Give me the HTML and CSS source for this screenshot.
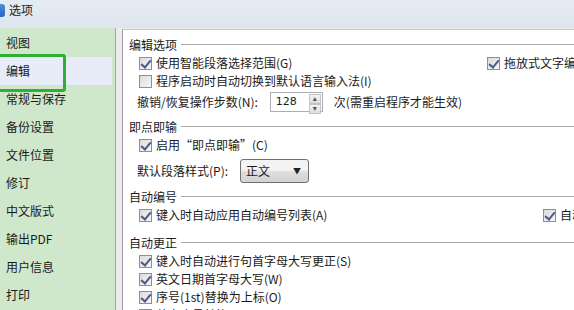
FILE: index.html
```html
<!DOCTYPE html>
<html lang="zh-CN">
  <head>
    <meta charset="UTF-8" />
    <title>选项</title>
    <link rel="stylesheet" href="styles.css">
  </head>
  <body>
    <header class="titlebar">
      <span class="titlebar__icon"></span>
      <span class="titlebar__text">选项</span>
    </header>
    <div class="window">
      <nav class="sidebar">
        <p class="sidebar__item">视图</p>
        <p class="sidebar__item is_active">编辑</p>
        <p class="sidebar__item">常规与保存</p>
        <p class="sidebar__item">备份设置</p>
        <p class="sidebar__item">文件位置</p>
        <p class="sidebar__item">修订</p>
        <p class="sidebar__item">中文版式</p>
        <p class="sidebar__item">输出PDF</p>
        <p class="sidebar__item">用户信息</p>
        <p class="sidebar__item">打印</p>
        <span class="highlight"></span>
      </nav>
      <main class="panel">
        <!-- 编辑选项 -->
        <section class="group">
          <h2 class="group__title">编辑选项</h2>
          <div class="row">
            <label class="check check--wide"><span class="box is_checked"></span>使用智能段落选择范围(G)</label>
            <label class="check"><span class="box is_checked"></span>拖放式文字编辑(D)</label>
          </div>
          <div class="row">
            <label class="check"><span class="box"></span>程序启动时自动切换到默认语言输入法(I)</label>
          </div>
          <div class="row row--field">
            <span class="label">撤销/恢复操作步数(N):</span>
            <span class="spin">
              <span class="spin__value">128</span>
              <span class="spin__buttons">
                <span class="spin__btn">▴</span>
                <span class="spin__btn">▾</span>
              </span>
            </span>
            <span class="label">次(需重启程序才能生效)</span>
          </div>
        </section>
        <!-- 即点即输 -->
        <section class="group">
          <h2 class="group__title">即点即输</h2>
          <div class="row">
            <label class="check"><span class="box is_checked"></span>启用“即点即输”(C)</label>
          </div>
          <div class="row row--select">
            <span class="label">默认段落样式(P):</span>
            <span class="select">正文<span class="select__arrow">▼</span></span>
          </div>
        </section>
        <!-- 自动编号 -->
        <section class="group">
          <h2 class="group__title">自动编号</h2>
          <div class="row">
            <label class="check check--wider"><span class="box is_checked"></span>键入时自动应用自动编号列表(A)</label>
            <label class="check"><span class="box is_checked"></span>自动带圈编号</label>
          </div>
        </section>
        <!-- 自动更正 -->
        <section class="group group--last">
          <h2 class="group__title">自动更正</h2>
          <div class="row">
            <label class="check"><span class="box is_checked"></span>键入时自动进行句首字母大写更正(S)</label>
          </div>
          <div class="row">
            <label class="check"><span class="box is_checked"></span>英文日期首字母大写(W)</label>
          </div>
          <div class="row">
            <label class="check"><span class="box is_checked"></span>序号(1st)替换为上标(O)</label>
          </div>
          <div class="row">
            <label class="check"><span class="box is_checked"></span>英文序号替换</label>
          </div>
        </section>
      </main>
    </div>
  </body>
</html>
```

FILE: styles.css
```css
:root {
  --color-text: #1a1a1a;
  --color-green: #cfe7cb;
  --color-line: #a9a9a9;
  --color-strip: #ececec;
  color: var(--color-text);
  font-family: 'Noto Sans CJK SC', 'DejaVu Sans', sans-serif;
  font-size: 12px;
  line-height: 1.5;
}
* {
  margin: 0;
  padding: 0;
  box-sizing: border-box;
}
body {
  width: 574px;
  height: 310px;
  overflow: hidden;
  background-color: var(--color-strip);
}
/* タイトルバー */
.titlebar {
  display: flex;
  align-items: center;
  gap: 4px;
  height: 28px;
  padding-bottom: 8px;
  background: linear-gradient(#e6ecf3, #dde5ee);
}
.titlebar__icon {
  width: 5px;
  height: 13px;
  border-radius: 0 3px 3px 0;
  background: linear-gradient(#4f8fd8, #2a64b8);
}
.titlebar__text {
  font-size: 12px;
  color: #222;
}
/* 本体 */
.window {
  display: flex;
  height: 282px;
  background-color: var(--color-strip);
}
/* サイドバー */
.sidebar {
  position: relative;
  flex: none;
  width: 116px;
  padding: 1px 0 0;
  background-color: var(--color-green);
  border-right: 1px solid #9ea79b;
}
.sidebar__item {
  height: 28px;
  padding-left: 6px;
  margin-right: 3px;
  line-height: 28px;
  font-size: 12px;
  white-space: nowrap;
}
.sidebar__item.is_active {
  background-color: #e7ecf8;
}
.highlight {
  position: absolute;
  left: -4px;
  top: 26px;
  width: 70px;
  height: 38px;
  border: 3px solid #2fb032;
  border-radius: 3px;
}
/* パネル */
.panel {
  flex: 1;
  min-width: 0;
  overflow: hidden;
  margin-left: 6px;
  margin-top: 1px;
  padding: 5px 0 0 6px;
  background-color: #fff;
  border-left: 1px solid #a0a0a0;
  border-top: 1px solid #c8c8c8;
}
.group + .group {
  margin-top: 3px;
}
.group.group--last {
  margin-top: 9px;
}
.group__title {
  display: flex;
  align-items: center;
  gap: 4px;
  height: 19px;
  font-size: 12px;
  font-weight: 400;
}
.group__title::after {
  content: '';
  flex: 1;
  height: 1px;
  background-color: var(--color-line);
}
.row {
  display: flex;
  align-items: center;
  height: 18px;
  padding-left: 10px;
}
.row--field {
  height: 24px;
  padding-left: 8px;
}
.row--select {
  height: 26px;
  margin-top: 4px;
  padding-left: 8px;
}
.check {
  display: flex;
  flex: none;
  align-items: center;
  gap: 4px;
  white-space: nowrap;
}
.check--wide {
  width: 348px;
}
.check--wider {
  width: 404px;
}
/* チェックボックス */
.box {
  position: relative;
  flex: none;
  width: 13px;
  height: 13px;
  border: 1px solid #8e8f8f;
  background: linear-gradient(135deg, #dcdcdc, #f6f6f6);
}
.box.is_checked::after {
  content: '';
  position: absolute;
  left: 3px;
  top: 0;
  width: 4px;
  height: 8px;
  border: solid #4b5a8c;
  border-width: 0 2px 2px 0;
  transform: rotate(40deg);
}
.label {
  flex: none;
  white-space: nowrap;
}
/* スピン */
.spin {
  display: flex;
  flex: none;
  align-items: center;
  justify-content: space-between;
  width: 53px;
  height: 20px;
  margin: 0 11px 0 12px;
  padding-left: 5px;
  border: 1px solid #abadb3;
  font-family: 'DejaVu Sans', sans-serif;
  font-size: 11px;
}
.spin__buttons {
  display: flex;
  flex-direction: column;
  width: 12px;
  height: 17px;
  margin-right: 1px;
}
.spin__btn {
  flex: 1;
  display: flex;
  align-items: center;
  justify-content: center;
  font-size: 8px;
  line-height: 1;
  color: #555;
  background: linear-gradient(#f4f4f4, #dedede);
  border: 1px solid #c3c3c3;
}
/* セレクト */
.select {
  display: flex;
  flex: none;
  align-items: center;
  justify-content: space-between;
  width: 69px;
  height: 24px;
  margin-left: 12px;
  padding: 0 7px 0 5px;
  border: 1px solid #707070;
  border-radius: 3px;
  background: linear-gradient(#f3f3f3 45%, #dddddd 55%, #d3d3d3);
  font-size: 12px;
}
.select__arrow {
  font-size: 8px;
  color: #222;
}
```
